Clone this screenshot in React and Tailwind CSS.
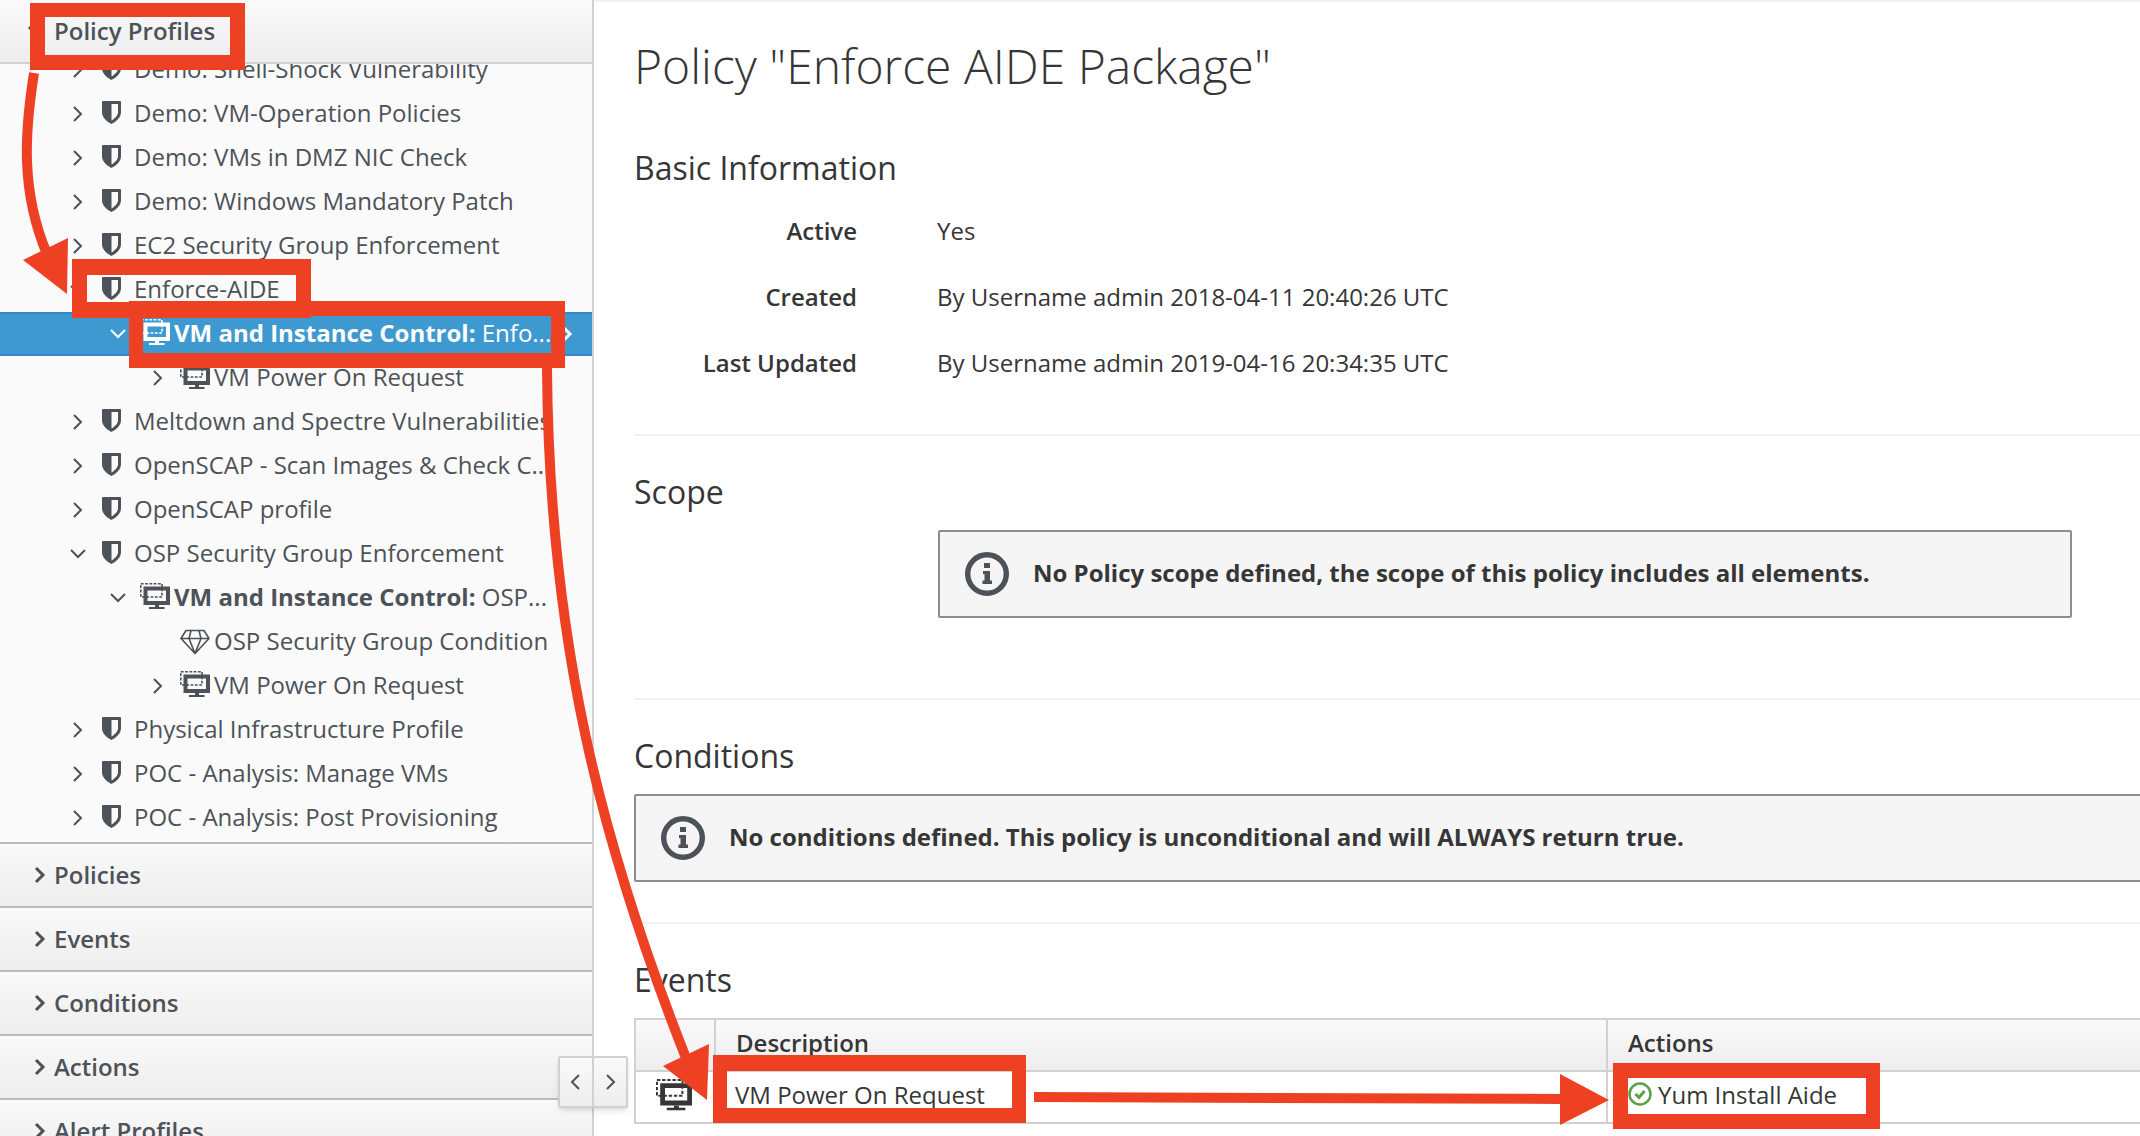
const INK = 'text-[#4d5258]';

function Chevron({ dir = 'right', bold = false, className = '' }) {
  const d = dir === 'right' ? 'M8 4 L15 11 L8 18' : dir === 'left' ? 'M14 4 L7 11 L14 18' : 'M5 7 L12 14 L19 7';
  return (
    <svg viewBox="0 0 22 22" className={'h-[22px] w-[22px] shrink-0 ' + className} fill="none" stroke="currentColor" strokeWidth={bold ? 3 : 2} aria-hidden="true">
      <path d={d} />
    </svg>
  );
}

function Shield() {
  return (
    <svg viewBox="0 0 19 23" className="mb-1 h-[23px] w-[19px] shrink-0" aria-hidden="true">
      <path d="M1 0 H18 Q19 0 19 1 V11 C19 17 14 20.500 9.500 23 C5 20.500 0 17 0 11 V1 Q0 0 1 0 Z M9.500 3 V19.500 C13 17.500 16 14.500 16 11 V3 Z" fill="currentColor" fillRule="evenodd" />
    </svg>
  );
}

function VmScreen({ className = 'h-[30px] w-[30px]' }) {
  return (
    <svg viewBox="0 0 30 30" className={'shrink-0 ' + className} aria-hidden="true">
      <path d="M0.800 0.800 H22 V14 H0.800 Z" fill="none" stroke="currentColor" strokeWidth="1.6" strokeDasharray="2.800 1.500" />
      <path d="M3.500 3.500 H30 V22 H3.500 Z M7.500 7.500 V18 H26 V7.500 Z" fill="currentColor" fillRule="evenodd" />
      <path d="M15 22 H19 V24 H24.500 V26 H9 V24 H15 Z" fill="currentColor" />
    </svg>
  );
}

function Gem() {
  return (
    <svg viewBox="0 0 30 26" className="h-[26px] w-[30px] shrink-0" fill="none" stroke="currentColor" strokeWidth="1.6" strokeLinejoin="round" aria-hidden="true">
      <path d="M6 1.500 H24 L29 9.500 L15 24.500 L1 9.500 Z M1 9.500 H29 M11 1.500 L9 9.500 L15 24.500 L21 9.500 L19 1.500" />
    </svg>
  );
}

function Info() {
  return (
    <svg viewBox="0 0 44 44" className="h-11 w-11 shrink-0 text-[#4d5258]" aria-hidden="true">
      <circle cx="22" cy="22" r="19.300" fill="none" stroke="currentColor" strokeWidth="5.400" />
      <path d="M19 11 H25 V16 H19 Z M18 19 H25 V28.500 H27 V32 H17.500 V28.500 H19.500 V22 H18 Z" fill="currentColor" />
    </svg>
  );
}

const PAD = ['pl-[66px]', 'pl-[106px]', 'pl-[146px]'];

const TREE = [
  { level: 0, text: 'Demo: Shell-Shock Vulnerability' },
  { level: 0, text: 'Demo: VM-Operation Policies' },
  { level: 0, text: 'Demo: VMs in DMZ NIC Check' },
  { level: 0, text: 'Demo: Windows Mandatory Patch' },
  { level: 0, text: 'EC2 Security Group Enforcement' },
  { level: 0, text: 'Enforce-AIDE', open: true },
  { level: 1, icon: 'vm', strong: 'VM and Instance Control:', text: ' Enfo...', open: true, selected: true },
  { level: 2, icon: 'vm', text: 'VM Power On Request' },
  { level: 0, text: 'Meltdown and Spectre Vulnerabilities' },
  { level: 0, text: 'OpenSCAP - Scan Images & Check C...' },
  { level: 0, text: 'OpenSCAP profile' },
  { level: 0, text: 'OSP Security Group Enforcement', open: true },
  { level: 1, icon: 'vm', strong: 'VM and Instance Control:', text: ' OSP...', open: true },
  { level: 2, icon: 'gem', text: 'OSP Security Group Condition', leaf: true },
  { level: 2, icon: 'vm', text: 'VM Power On Request' },
  { level: 0, text: 'Physical Infrastructure Profile' },
  { level: 0, text: 'POC - Analysis: Manage VMs' },
  { level: 0, text: 'POC - Analysis: Post Provisioning' },
];

function TreeRow({ node }) {
  const tone = node.selected ? 'border-[#3386ca] bg-[#3f99d1] text-white' : 'border-transparent ' + INK;
  return (
    <li className={'flex h-11 items-center border-y-2 whitespace-pre ' + PAD[node.level] + ' ' + tone}>
      {node.leaf ? <span className="w-[22px] shrink-0" /> : <Chevron dir={node.open ? 'down' : 'right'} />}
      <span className={'flex shrink-0 items-center ' + (node.icon ? 'ml-3 w-[34px]' : 'ml-[14px] w-8')}>
        {node.icon === 'vm' ? <VmScreen /> : node.icon === 'gem' ? <Gem /> : <Shield />}
      </span>
      <span className="pb-0.5">
        {node.strong && <b className="font-bold">{node.strong}</b>}
        {node.text}
      </span>
      {node.selected && <Chevron bold className="ml-1" />}
    </li>
  );
}

function PanelHeader({ title, open }) {
  return (
    <button type="button" className={'flex h-16 w-full shrink-0 items-center bg-linear-to-b from-[#fafafa] to-[#ededed] text-left font-semibold ' + INK + (open ? ' gap-2 border-b-2 border-[#d1d1d1] pl-6' : ' gap-1 border-t-2 border-[#bbbbbb] pl-7')}>
      <Chevron dir={open ? 'down' : 'right'} bold />
      <span>{title}</span>
    </button>
  );
}

function Notice({ children }) {
  return (
    <div className="flex h-[88px] items-center rounded-[2px] border-2 border-[#8b8d8f] bg-[#f5f5f5] pl-[25px] font-bold">
      <Info />
      <p className="ml-6 pb-0.5">{children}</p>
    </div>
  );
}

function Fact({ label, children }) {
  return (
    <>
      <dt className="text-right font-semibold">{label}</dt>
      <dd>{children}</dd>
    </>
  );
}

function Annotations() {
  return (
    <svg className="pointer-events-none absolute top-0 left-0 h-[1136px] w-[2140px]" viewBox="0 0 2140 1136" fill="none" stroke="#ee4023" aria-hidden="true">
      <g fill="#ee4023" stroke="none" fillRule="evenodd">
        <path d="M30 3 H245 V70 H30 Z M45 17 V55 H230 V17 Z" />
        <path d="M72 259 H311 V318 H72 Z M87 275 V302 H296 V275 Z" />
        <path d="M129 301 H565 V368 H129 Z M143 316 V353 H551 V316 Z" />
        <path d="M713 1055 H1026 V1123 H713 Z M727 1071 V1108 H1012 V1071 Z" />
        <path d="M1613 1063 H1880 V1129 H1613 Z M1628 1078 V1114 H1866 V1078 Z" />
      </g>
      <path d="M34 73 C25 130 20 190 47 254" strokeWidth="10" />
      <path d="M23 260 L68 238 L67 294 Z" fill="#ee4023" stroke="none" />
      <path d="M547 368 C549 640 600 840 686 1058" strokeWidth="10" />
      <path d="M663 1066 L709 1044 L707 1100 Z" fill="#ee4023" stroke="none" />
      <path d="M1034 1097 L1562 1099" strokeWidth="10" />
      <path d="M1560 1074 L1609 1100 L1560 1125 Z" fill="#ee4023" stroke="none" />
    </svg>
  );
}

export default function App() {
  return (
    <div className="relative flex h-screen overflow-hidden bg-white font-['Open_Sans',sans-serif] text-2xl text-[#363636]">
      <aside className="flex w-[594px] shrink-0 flex-col border-r-2 border-[#d1d1d1] bg-[#fafafa]">
        <PanelHeader title="Policy Profiles" open />
        <div className="flex h-[778px] shrink-0 flex-col justify-end overflow-hidden pb-0.5">
          <ul>
            {TREE.map((node, i) => (
              <TreeRow key={i} node={node} />
            ))}
          </ul>
        </div>
        {['Policies', 'Events', 'Conditions', 'Actions', 'Alert Profiles'].map((title) => (
          <PanelHeader key={title} title={title} />
        ))}
      </aside>

      <div className={'absolute top-[1056px] left-[558px] flex rounded-[2px] border-2 border-[#d1d1d1] bg-linear-to-b from-[#fafafa] to-[#ededed] shadow-md ' + INK}>
        <button type="button" aria-label="Narrow the side panel" className="flex h-12 w-8 items-center justify-center">
          <Chevron dir="left" />
        </button>
        <button type="button" aria-label="Widen the side panel" className="flex h-12 w-[34px] items-center justify-center border-l-2 border-[#d1d1d1]">
          <Chevron />
        </button>
      </div>

      <main className="min-w-0 grow overflow-hidden border-t-2 border-[#f1f1f1] pl-10">
        <h1 className="mt-8 text-5xl leading-[64px] font-light">Policy "Enforce AIDE Package"</h1>
        <section className="mt-12 border-b-2 border-[#f1f1f1] pb-[54px]">
          <h2 className="text-[32px] leading-11">Basic Information</h2>
          <dl className="mt-6 grid grid-cols-[223px_1fr] gap-x-20 gap-y-8 leading-[34px]">
            <Fact label="Active">Yes</Fact>
            <Fact label="Created">By Username admin 2018-04-11 20:40:26 UTC</Fact>
            <Fact label="Last Updated">By Username admin 2019-04-16 20:34:35 UTC</Fact>
          </dl>
        </section>
        <section className="mt-[34px] border-b-2 border-[#f1f1f1] pb-20">
          <h2 className="text-[32px] leading-11">Scope</h2>
          <div className="mt-4 mr-[68px] ml-[304px]">
            <Notice>No Policy scope defined, the scope of this policy includes all elements.</Notice>
          </div>
        </section>
        <section className="mt-[34px] border-b-2 border-[#f1f1f1] pb-10">
          <h2 className="text-[32px] leading-11">Conditions</h2>
          <div className="-mr-2 mt-4">
            <Notice>No conditions defined. This policy is unconditional and will ALWAYS return true.</Notice>
          </div>
        </section>
        <section className="mt-[34px]">
          <h2 className="text-[32px] leading-11">Events</h2>
          <div className="-mr-2 mt-4">
            <table className="w-full table-fixed border-collapse border-2 border-[#d1d1d1]">
              <colgroup>
                <col className="w-20" />
                <col className="w-[892px]" />
                <col />
              </colgroup>
              <thead className="bg-linear-to-b from-[#fafafa] to-[#ededed]">
                <tr className="h-[52px] text-left">
                  <th className="border-2 border-[#d1d1d1]" aria-label="Type" />
                  <th className="border-2 border-[#d1d1d1] pb-1 pl-5 font-semibold">Description</th>
                  <th className="border-2 border-[#d1d1d1] pb-1 pl-5 font-semibold">Actions</th>
                </tr>
              </thead>
              <tbody>
                <tr className="h-[52px]">
                  <td className="border-y-2 border-[#d1d1d1] pl-5">
                    <VmScreen className="h-9 w-9" />
                  </td>
                  <td className="border-y-2 border-[#d1d1d1] pb-1 pl-5">VM Power On Request</td>
                  <td className="border-2 border-[#d1d1d1] pb-1 pl-5">
                    <span className="flex items-center gap-[6px]">
                      <svg viewBox="0 0 24 24" className="mb-0.5 h-6 w-6" fill="none" stroke="#5aa147" aria-hidden="true">
                        <circle cx="12" cy="12" r="10.500" strokeWidth="2.500" />
                        <path d="M7.500 12 L11 15.500 L16.500 9" strokeWidth="3" />
                      </svg>
                      Yum Install Aide
                    </span>
                  </td>
                </tr>
              </tbody>
            </table>
          </div>
        </section>
      </main>
      <Annotations />
    </div>
  );
}
